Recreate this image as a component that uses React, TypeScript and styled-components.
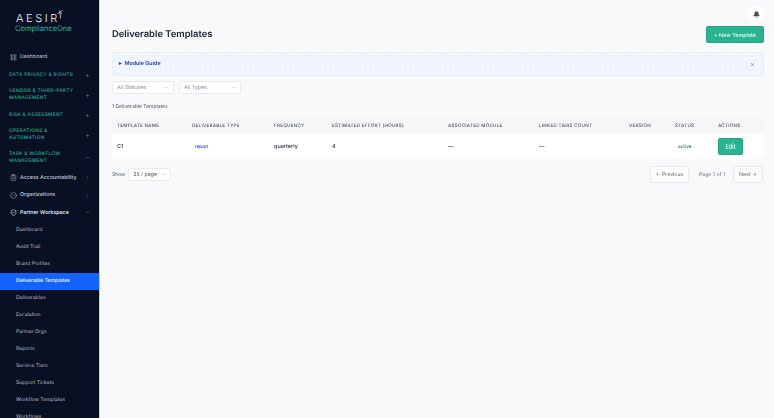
import React from "react";
import styled, { createGlobalStyle } from "styled-components";
import { ChevronDown, ChevronRight, Plus, Minus, LayoutGrid, ClipboardList, ShieldCheck, CircleCheck, Bell, X } from "lucide-react";

const GlobalStyle = createGlobalStyle`
  html, body {
    margin: 0;
    height: 100%;
    background: #f8f9fb;
    font-family: Inter, "Liberation Sans", sans-serif;
    text-rendering: geometricPrecision;
  }
  * { box-sizing: border-box; }
`;

const Shell = styled.div`
  display: flex;
  width: 774px;
  height: 418px;
  overflow: hidden;
  opacity: 0.999;
`;

const Sidebar = styled.aside`
  width: 100px;
  flex-shrink: 0;
  height: 418px;
  overflow: hidden;
  background: #0a1024;
  border-right: 1px solid #c9ccd6;
`;

const Logo = styled.div`
  height: 48px;
  padding: 12px 0 0 16px;
  position: relative;
`;

const LogoName = styled.div`
  font-size: 11px;
  font-weight: 300;
  line-height: 12px;
  letter-spacing: 2.6px;
  color: #f1f3f6;
`;

const LogoSub = styled.div`
  margin: 0 0 0 -1px;
  font-size: 7.5px;
  line-height: 10px;
  color: #25b795;
`;

const LogoMark = styled.svg`
  position: absolute;
  left: 56px;
  top: 9px;
  width: 7px;
  height: 11px;
`;

const NavRow = styled.div`
  display: flex;
  align-items: center;
  gap: 3px;
  height: ${(p) => (p.$tall ? "18px" : "17.5px")};
  padding: 0 9px 0 10px;
  font-size: 5.3px;
  color: ${(p) => (p.$bright ? "#f2f4f7" : "#c5c9d3")};
  font-weight: ${(p) => (p.$strong ? 500 : 400)};

  & > svg:first-child {
    width: 7px;
    height: 7px;
    flex-shrink: 0;
  }
`;

const NavLabel = styled.span`
  flex: 1;
  white-space: nowrap;
`;

const TealArrow = styled.span`
  display: flex;
  color: #25b795;

  svg {
    width: 5px;
    height: 5px;
  }
`;

const GroupRow = styled.div`
  display: flex;
  align-items: center;
  justify-content: space-between;
  min-height: ${(p) => (p.$height ? p.$height : 18)}px;
  padding: 0 9px 0 9px;
  font-size: 4.8px;
  line-height: 7px;
  font-weight: 500;
  letter-spacing: 0.3px;
  color: #22a98a;
`;

const GroupLabel = styled.span`
  width: 72px;
`;

const SubRow = styled.div`
  display: flex;
  align-items: center;
  height: 17px;
  padding-left: 16px;
  font-size: 5.1px;
  white-space: nowrap;
  color: ${(p) => (p.$active ? "#ffffff" : "#b4b8c4")};
  background: ${(p) => (p.$active ? "#1463ff" : "transparent")};
  font-weight: ${(p) => (p.$active ? 500 : 400)};
`;

const Main = styled.main`
  flex: 1;
  min-width: 0;
  padding: 6px 10px 0 12px;
`;

const TopBar = styled.div`
  display: flex;
  justify-content: flex-end;
  height: 20px;
`;

const BellButton = styled.div`
  width: 16px;
  height: 16px;
  border-radius: 50%;
  background: #ffffff;
  display: flex;
  align-items: center;
  justify-content: center;
  color: #4b5064;

  svg {
    width: 7px;
    height: 7px;
    fill: #4b5064;
  }
`;

const HeaderRow = styled.div`
  display: flex;
  align-items: center;
  justify-content: space-between;
  height: 17px;
`;

const Title = styled.h1`
  margin: 0;
  font-size: 9.4px;
  font-weight: 600;
  color: #1b2130;
`;

const PrimaryButton = styled.button`
  width: 58px;
  height: 17px;
  padding: 0;
  border: 1px solid #25a386;
  border-radius: 2px;
  background: #2ab391;
  color: #eefaf6;
  font: 500 5.4px Inter, "Liberation Sans", sans-serif;
`;

const Banner = styled.div`
  display: flex;
  align-items: center;
  justify-content: space-between;
  height: 24px;
  margin-top: 9px;
  padding: 0 8px 0 6px;
  border: 1px solid #e3edfb;
  border-radius: 2px;
  background-color: #f1f6fe;
  background-image: radial-gradient(#e2eaf7 0.5px, transparent 0.6px);
  background-size: 5px 5px;
  font-size: 5.4px;
  font-weight: 600;
  color: #1d43b8;
`;

const BannerClose = styled.span`
  display: flex;
  color: #3c4558;

  svg {
    width: 5px;
    height: 5px;
  }
`;

const Filters = styled.div`
  display: flex;
  gap: 5px;
  margin-top: 5px;
`;

const SelectBox = styled.div`
  display: flex;
  align-items: center;
  justify-content: space-between;
  width: ${(p) => p.$width || 62}px;
  height: 13px;
  padding: 0 4px;
  border: 1px solid #e8eaef;
  border-radius: 2px;
  background: #ffffff;
  font-size: 5.3px;
  color: ${(p) => (p.$dark ? "#4a5060" : "#8a8f9c")};

  svg {
    width: 5px;
    height: 5px;
    color: #8a8f9c;
  }
`;

const Count = styled.div`
  margin-top: 9px;
  font-size: 5px;
  line-height: 9px;
  color: #4f5564;
`;

const TableCard = styled.div`
  margin-top: 6px;
  border-radius: 4px;
  overflow: hidden;
  background: #ffffff;
`;

const Table = styled.table`
  width: 652px;
  table-layout: fixed;
  border-collapse: collapse;
`;

const HeadCell = styled.th`
  height: 16px;
  padding: 0 0 0 5px;
  background: #f5f6f8;
  font-size: 4.6px;
  font-weight: 500;
  letter-spacing: 0.25px;
  text-align: left;
  text-transform: uppercase;
  white-space: nowrap;
  color: #4a5060;
`;

const Cell = styled.td`
  height: 25px;
  padding: 0 0 0 5px;
  font-size: 5.5px;
  font-weight: 500;
  color: #2a3040;
`;

const TypeBadge = styled.span`
  margin-left: 3px;
  font-size: 4.5px;
  font-weight: 600;
  color: #2563eb;
`;

const StatusText = styled.span`
  margin-left: 3px;
  font-size: 4.7px;
  font-weight: 500;
  color: #14735d;
`;

const EditButton = styled(PrimaryButton)`
  display: block;
  width: 25px;
  font-size: 5.6px;
`;

const Footer = styled.div`
  display: flex;
  align-items: center;
  justify-content: space-between;
  margin-top: 7px;
`;

const PageSize = styled.div`
  display: flex;
  align-items: center;
  gap: 3px;
  font-size: 5px;
  color: #5d6372;
`;

const Pager = styled.div`
  display: flex;
  align-items: center;
  padding-right: 1px;
`;

const PagerButton = styled.div`
  display: flex;
  align-items: center;
  justify-content: center;
  height: 17px;
  width: ${(p) => p.$width}px;
  border: 1px solid #e8eaef;
  border-radius: 2px;
  background: #fbfbfc;
  font-size: 5.2px;
  color: #5d6372;
`;

const PageText = styled.span`
  margin: 0 8px 0 10px;
  font-size: 5.2px;
  color: #6a7080;
`;

const subItems = [
  "Dashboard",
  "Audit Trail",
  "Brand Profiles",
  "Deliverable Templates",
  "Deliverables",
  "Escalation",
  "Partner Orgs",
  "Reports",
  "Service Tiers",
  "Support Tickets",
  "Workflow Templates",
  "Workflows",
];

const columns: [string, number][] = [
  ["Template Name", 75],
  ["Deliverable Type", 82],
  ["Frequency", 58],
  ["Estimated Effort (Hours)", 116],
  ["Associated Module", 91],
  ["Linked Tiers Count", 90],
  ["Version", 46],
  ["Status", 43],
  ["Actions", 51],
];

const Group = ({ label, open, height }: { label: string; open?: boolean; height?: number }) => (
  <GroupRow $height={height}>
    <GroupLabel>{label}</GroupLabel>
    <TealArrow>{open ? <Minus /> : <Plus />}</TealArrow>
  </GroupRow>
);

export default function App() {
  return (
    <Shell>
      <GlobalStyle />
      <Sidebar>
        <Logo>
          <LogoName>AESIR</LogoName>
          <LogoSub>ComplianceOne</LogoSub>
          <LogoMark viewBox="0 0 7 11" fill="none" stroke="#f1f3f6" strokeWidth="0.7">
            <path d="M3.8 1.5L4.5 9.5M1.5 4.5l3-1.5L6.5 1M4.3 5.5L6 4" />
          </LogoMark>
        </Logo>
        <NavRow $tall>
          <LayoutGrid strokeWidth={1.5} />
          <NavLabel>Dashboard</NavLabel>
        </NavRow>
        <Group label="DATA PRIVACY & RIGHTS" />
        <Group label="VENDOR & THIRD-PARTY MANAGEMENT" height={22} />
        <Group label="RISK & ASSESSMENT" />
        <Group label="OPERATIONS & AUTOMATION" height={22} />
        <Group label="TASK & WORKFLOW MANAGEMENT" open height={23} />
        <NavRow $strong>
          <ClipboardList strokeWidth={1.5} />
          <NavLabel>Access Accountability</NavLabel>
          <TealArrow><ChevronRight /></TealArrow>
        </NavRow>
        <NavRow $strong>
          <CircleCheck strokeWidth={1.5} />
          <NavLabel>Organizations</NavLabel>
          <TealArrow><ChevronRight /></TealArrow>
        </NavRow>
        <NavRow $strong $bright>
          <ShieldCheck strokeWidth={2} />
          <NavLabel>Partner Workspace</NavLabel>
          <TealArrow><ChevronDown /></TealArrow>
        </NavRow>
        {subItems.map((item) => (
          <SubRow key={item} $active={item === "Deliverable Templates"}>{item}</SubRow>
        ))}
      </Sidebar>
      <Main>
        <TopBar>
          <BellButton><Bell /></BellButton>
        </TopBar>
        <HeaderRow>
          <Title>Deliverable Templates</Title>
          <PrimaryButton>+ New Template</PrimaryButton>
        </HeaderRow>
        <Banner>
          <span>▸&nbsp;&nbsp;Module Guide</span>
          <BannerClose><X /></BannerClose>
        </Banner>
        <Filters>
          <SelectBox>All Statuses<ChevronDown /></SelectBox>
          <SelectBox>All Types<ChevronDown /></SelectBox>
        </Filters>
        <Count>1 Deliverable Templates</Count>
        <TableCard>
          <Table>
            <colgroup>
              {columns.map(([name, width]) => <col key={name} width={width} />)}
            </colgroup>
            <thead>
              <tr>
                {columns.map(([name]) => <HeadCell key={name}>{name}</HeadCell>)}
              </tr>
            </thead>
            <tbody>
              <tr>
                <Cell>C1</Cell>
                <Cell><TypeBadge>report</TypeBadge></Cell>
                <Cell>quarterly</Cell>
                <Cell>4</Cell>
                <Cell>—</Cell>
                <Cell>—</Cell>
                <Cell />
                <Cell><StatusText>active</StatusText></Cell>
                <Cell><EditButton>Edit</EditButton></Cell>
              </tr>
            </tbody>
          </Table>
        </TableCard>
        <Footer>
          <PageSize>
            Show
            <SelectBox $width={43} $dark>25 / page<ChevronDown /></SelectBox>
          </PageSize>
          <Pager>
            <PagerButton $width={39}>← Previous</PagerButton>
            <PageText>Page 1 of 1</PageText>
            <PagerButton $width={30}>Next →</PagerButton>
          </Pager>
        </Footer>
      </Main>
    </Shell>
  );
}
